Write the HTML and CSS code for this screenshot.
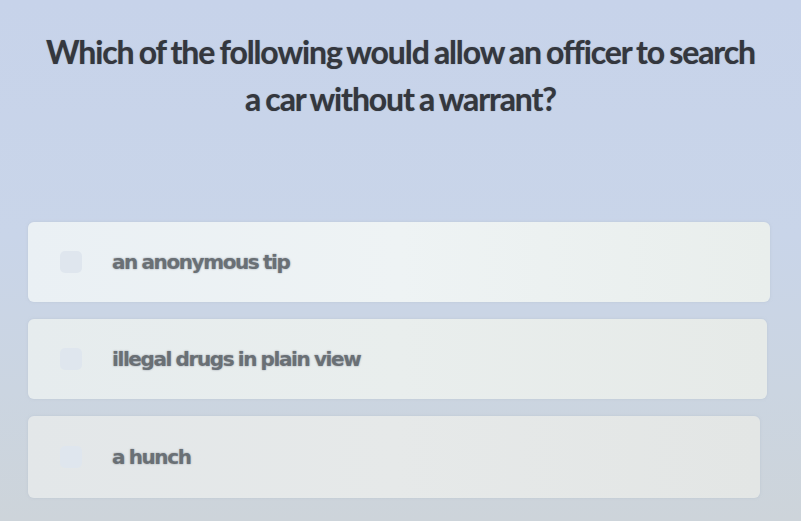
FILE: index.html
```html
<!DOCTYPE html>
<html>
<head>
<meta charset="utf-8">
<link rel="stylesheet" href="styles.css">
</head>
<body>
<div class="page">
  <h1 class="question">Which of the following would allow an officer to search<br>a car without a warrant?</h1>
  <div class="options">
    <div class="option opt1"><span class="radio"></span><span class="label">an anonymous tip</span></div>
    <div class="option opt2"><span class="radio"></span><span class="label">illegal drugs in plain view</span></div>
    <div class="option opt3"><span class="radio"></span><span class="label">a hunch</span></div>
  </div>
</div>
</body>
</html>
```

FILE: styles.css
```css
html, body {
  margin: 0;
  padding: 0;
}
body {
  width: 801px;
  height: 521px;
  overflow: hidden;
  background: linear-gradient(180deg, #c7d3ea 0%, #c9d5e9 45%, #cbd5e1 75%, #cdd4da 100%);
  font-family: Lato, "Open Sans", sans-serif;
}
.page {
  padding: 28px 31px 0 28px;
}
.question {
  margin: 0;
  height: 194px;
  text-align: center;
  font-size: 32px;
  font-weight: 700;
  line-height: 47px;
  letter-spacing: -1.1px;
  word-spacing: -1.5px;
  color: #34373e;
  padding-left: 3px;
  text-shadow: 0 0 1px rgba(52, 55, 62, 0.5);
}
.options {
  display: flex;
  flex-direction: column;
  gap: 17px;
}
.option {
  display: flex;
  align-items: center;
  height: 80px;
  border-radius: 6px;
  padding-left: 32px;
  box-shadow: 0 0 3px rgba(180, 190, 205, 0.6);
}
.opt1 {
  background: linear-gradient(90deg, #eaf0f4 0%, #eef3f4 50%, #e9eeec 100%);
}
.opt2 {
  background: linear-gradient(90deg, #e6ecee 0%, #e9eeed 50%, #e6eae8 100%);
  margin-right: 3px;
}
.opt3 {
  background: linear-gradient(90deg, #e3e7e9 0%, #e6e9e9 50%, #e3e6e5 100%);
  margin-right: 10px;
  height: 82px;
}
.radio {
  width: 22px;
  height: 22px;
  border-radius: 5px;
  background: #dfe6ee;
  flex: none;
  margin-right: 30px;
}
.label {
  font-family: "DejaVu Sans", sans-serif;
  font-size: 20px;
  font-weight: 700;
  letter-spacing: -1.4px;
  word-spacing: -1px;
  color: #6a7075;
  text-shadow: 0 0 2px #9096a0;
}
```
